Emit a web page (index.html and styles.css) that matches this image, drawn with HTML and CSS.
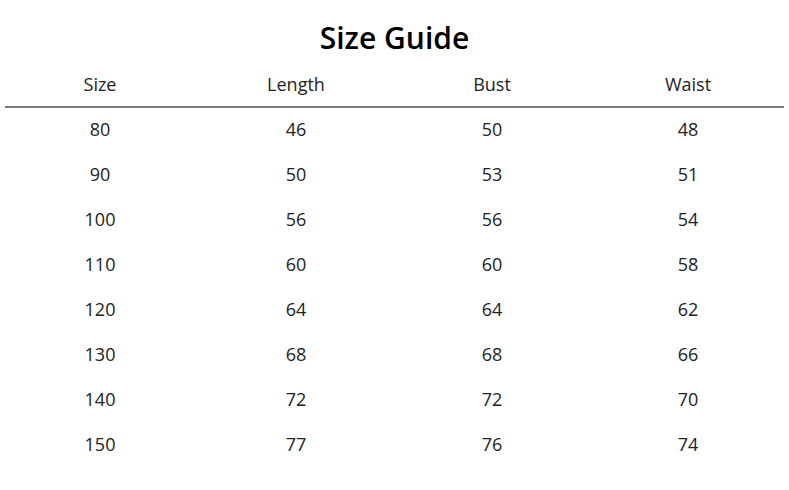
FILE: index.html
```html
<!DOCTYPE html>
<html>
<head>
<meta charset="utf-8">
<link rel="stylesheet" href="styles.css">
</head>
<body>
<div class="page">
  <h1 class="title">Size Guide</h1>
  <div class="table">
    <div class="row head">
      <div class="cell">Size</div><div class="cell">Length</div><div class="cell">Bust</div><div class="cell">Waist</div>
    </div>
    <div class="rule"></div>
    <div class="row"><div class="cell">80</div><div class="cell">46</div><div class="cell">50</div><div class="cell">48</div></div>
    <div class="row"><div class="cell">90</div><div class="cell">50</div><div class="cell">53</div><div class="cell">51</div></div>
    <div class="row"><div class="cell">100</div><div class="cell">56</div><div class="cell">56</div><div class="cell">54</div></div>
    <div class="row"><div class="cell">110</div><div class="cell">60</div><div class="cell">60</div><div class="cell">58</div></div>
    <div class="row"><div class="cell">120</div><div class="cell">64</div><div class="cell">64</div><div class="cell">62</div></div>
    <div class="row"><div class="cell">130</div><div class="cell">68</div><div class="cell">68</div><div class="cell">66</div></div>
    <div class="row"><div class="cell">140</div><div class="cell">72</div><div class="cell">72</div><div class="cell">70</div></div>
    <div class="row"><div class="cell">150</div><div class="cell">77</div><div class="cell">76</div><div class="cell">74</div></div>
  </div>
</div>
</body>
</html>
```
FILE: styles.css
```css
html, body {
  margin: 0;
  padding: 0;
  background: #ffffff;
}
.page {
  width: 789px;
  height: 490px;
  font-family: "Open Sans", "Noto Sans", sans-serif;
  color: #222222;
}
.title {
  margin: 0;
  padding-top: 14px;
  height: 48px;
  line-height: 48px;
  text-align: center;
  font-size: 30px;
  font-weight: 600;
  color: #000000;
}
.table {
  padding: 0 3px 0 2px;
}
.row {
  display: grid;
  grid-template-columns: repeat(4, 196px);
  height: 45px;
  box-sizing: border-box;
  padding-bottom: 3px;
  align-items: center;
}
.row.head {
  height: 44px;
  padding-bottom: 1px;
}
.cell {
  text-align: center;
  font-size: 18px;
  line-height: 24px;
}
.rule {
  height: 2px;
  margin: 0 2px 0 3px;
  background: #7a7a7a;
}
```
